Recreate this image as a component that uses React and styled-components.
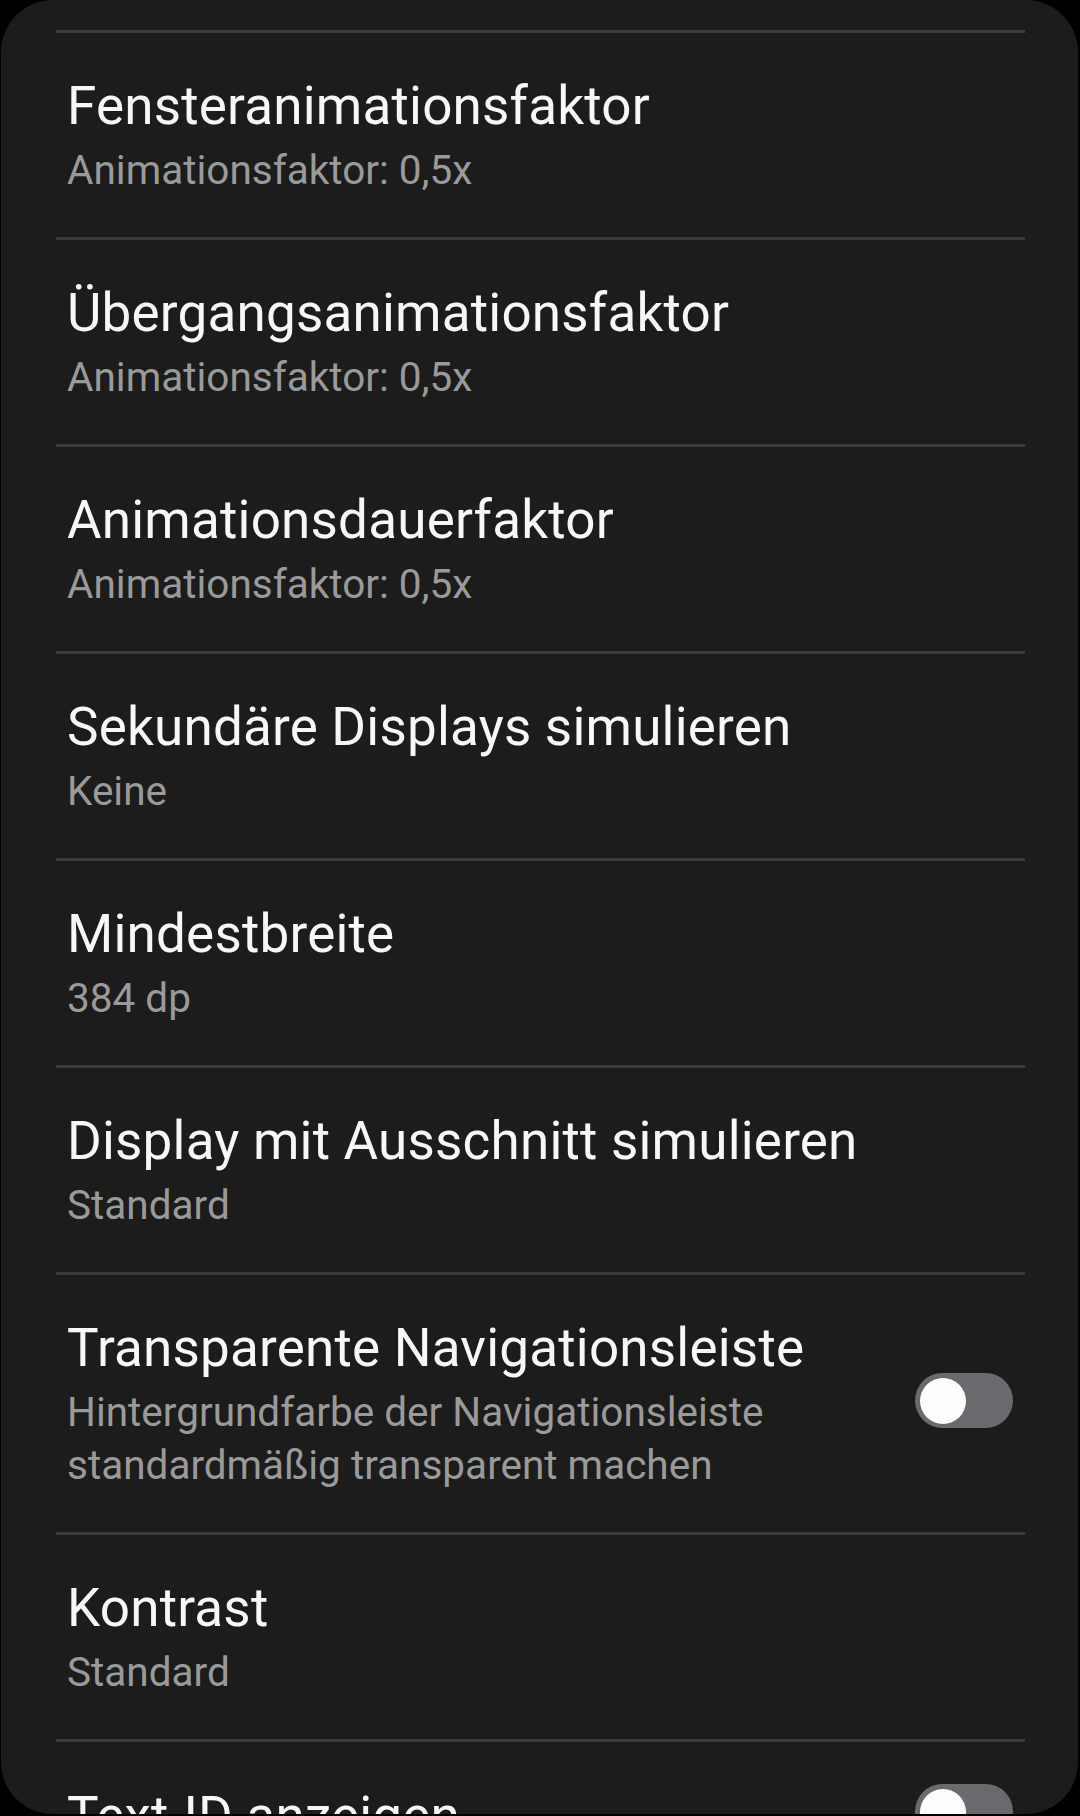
import React from "react";
import styled, { createGlobalStyle } from "styled-components";

const GlobalStyle = createGlobalStyle`
  html, body {
    margin: 0;
    padding: 0;
    background: #000;
  }
  body {
    font-family: Roboto, "Noto Sans", sans-serif;
    -webkit-font-smoothing: antialiased;
  }
`;

const Screen = styled.div`
  width: 1080px;
  height: 1816px;
  background: #000;
  overflow: hidden;
`;

const Card = styled.div`
  margin: 0 2px 0 1px;
  height: 1814px;
  background: #1c1c1c;
  border-radius: 52px;
  overflow: hidden;
  padding-top: 30px;
  box-sizing: border-box;
`;

const Divider = styled.div`
  height: 3px;
  margin: 0 53px 0 55px;
  background: #3b3b3b;
`;

const Row = styled.div`
  display: flex;
  align-items: center;
  gap: 24px;
  padding: 42px 65px 40px 66px;
`;

const Texts = styled.div`
  flex: 1;
  min-width: 0;
  display: flex;
  flex-direction: column;
  gap: 7px;
`;

const Title = styled.div`
  font-size: 53px;
  line-height: 62px;
  letter-spacing: 0.2px;
  color: #f7f7f7;
`;

const Subtitle = styled.div`
  font-size: 40.5px;
  line-height: 53px;
  color: #9a9a9a;
`;

const Track = styled.div`
  flex: none;
  width: 98px;
  height: 55px;
  margin-bottom: 8px;
  border-radius: 28px;
  background: ${(p) => (p.$on ? "#3e91ff" : "#6a6a6e")};
  display: flex;
  align-items: center;
  justify-content: ${(p) => (p.$on ? "flex-end" : "flex-start")};
  padding: 0 5px;
  box-sizing: border-box;
`;

const Thumb = styled.div`
  width: 46px;
  height: 46px;
  border-radius: 50%;
  background: #fdfdfd;
`;

const items = [
  { title: "Fensteranimationsfaktor", sub: "Animationsfaktor: 0,5x" },
  { title: "Übergangsanimationsfaktor", sub: "Animationsfaktor: 0,5x" },
  { title: "Animationsdauerfaktor", sub: "Animationsfaktor: 0,5x" },
  { title: "Sekundäre Displays simulieren", sub: "Keine" },
  { title: "Mindestbreite", sub: "384 dp" },
  { title: "Display mit Ausschnitt simulieren", sub: "Standard" },
  {
    title: "Transparente Navigationsleiste",
    sub: ["Hintergrundfarbe der Navigationsleiste", "standardmäßig transparent machen"],
    toggle: true,
  },
  { title: "Kontrast", sub: "Standard" },
  { title: "Text-ID anzeigen", toggle: true },
];

function SettingRow({ item }) {
  const lines = Array.isArray(item.sub) ? item.sub : item.sub ? [item.sub] : [];
  return (
    <Row>
      <Texts>
        <Title>{item.title}</Title>
        {lines.length > 0 && (
          <Subtitle>
            {lines.map((l, i) => (
              <div key={i}>{l}</div>
            ))}
          </Subtitle>
        )}
      </Texts>
      {item.toggle && (
        <Track $on={false}>
          <Thumb />
        </Track>
      )}
    </Row>
  );
}

export default function App() {
  return (
    <Screen>
      <GlobalStyle />
      <Card>
        {items.map((item) => (
          <React.Fragment key={item.title}>
            <Divider />
            <SettingRow item={item} />
          </React.Fragment>
        ))}
      </Card>
    </Screen>
  );
}
